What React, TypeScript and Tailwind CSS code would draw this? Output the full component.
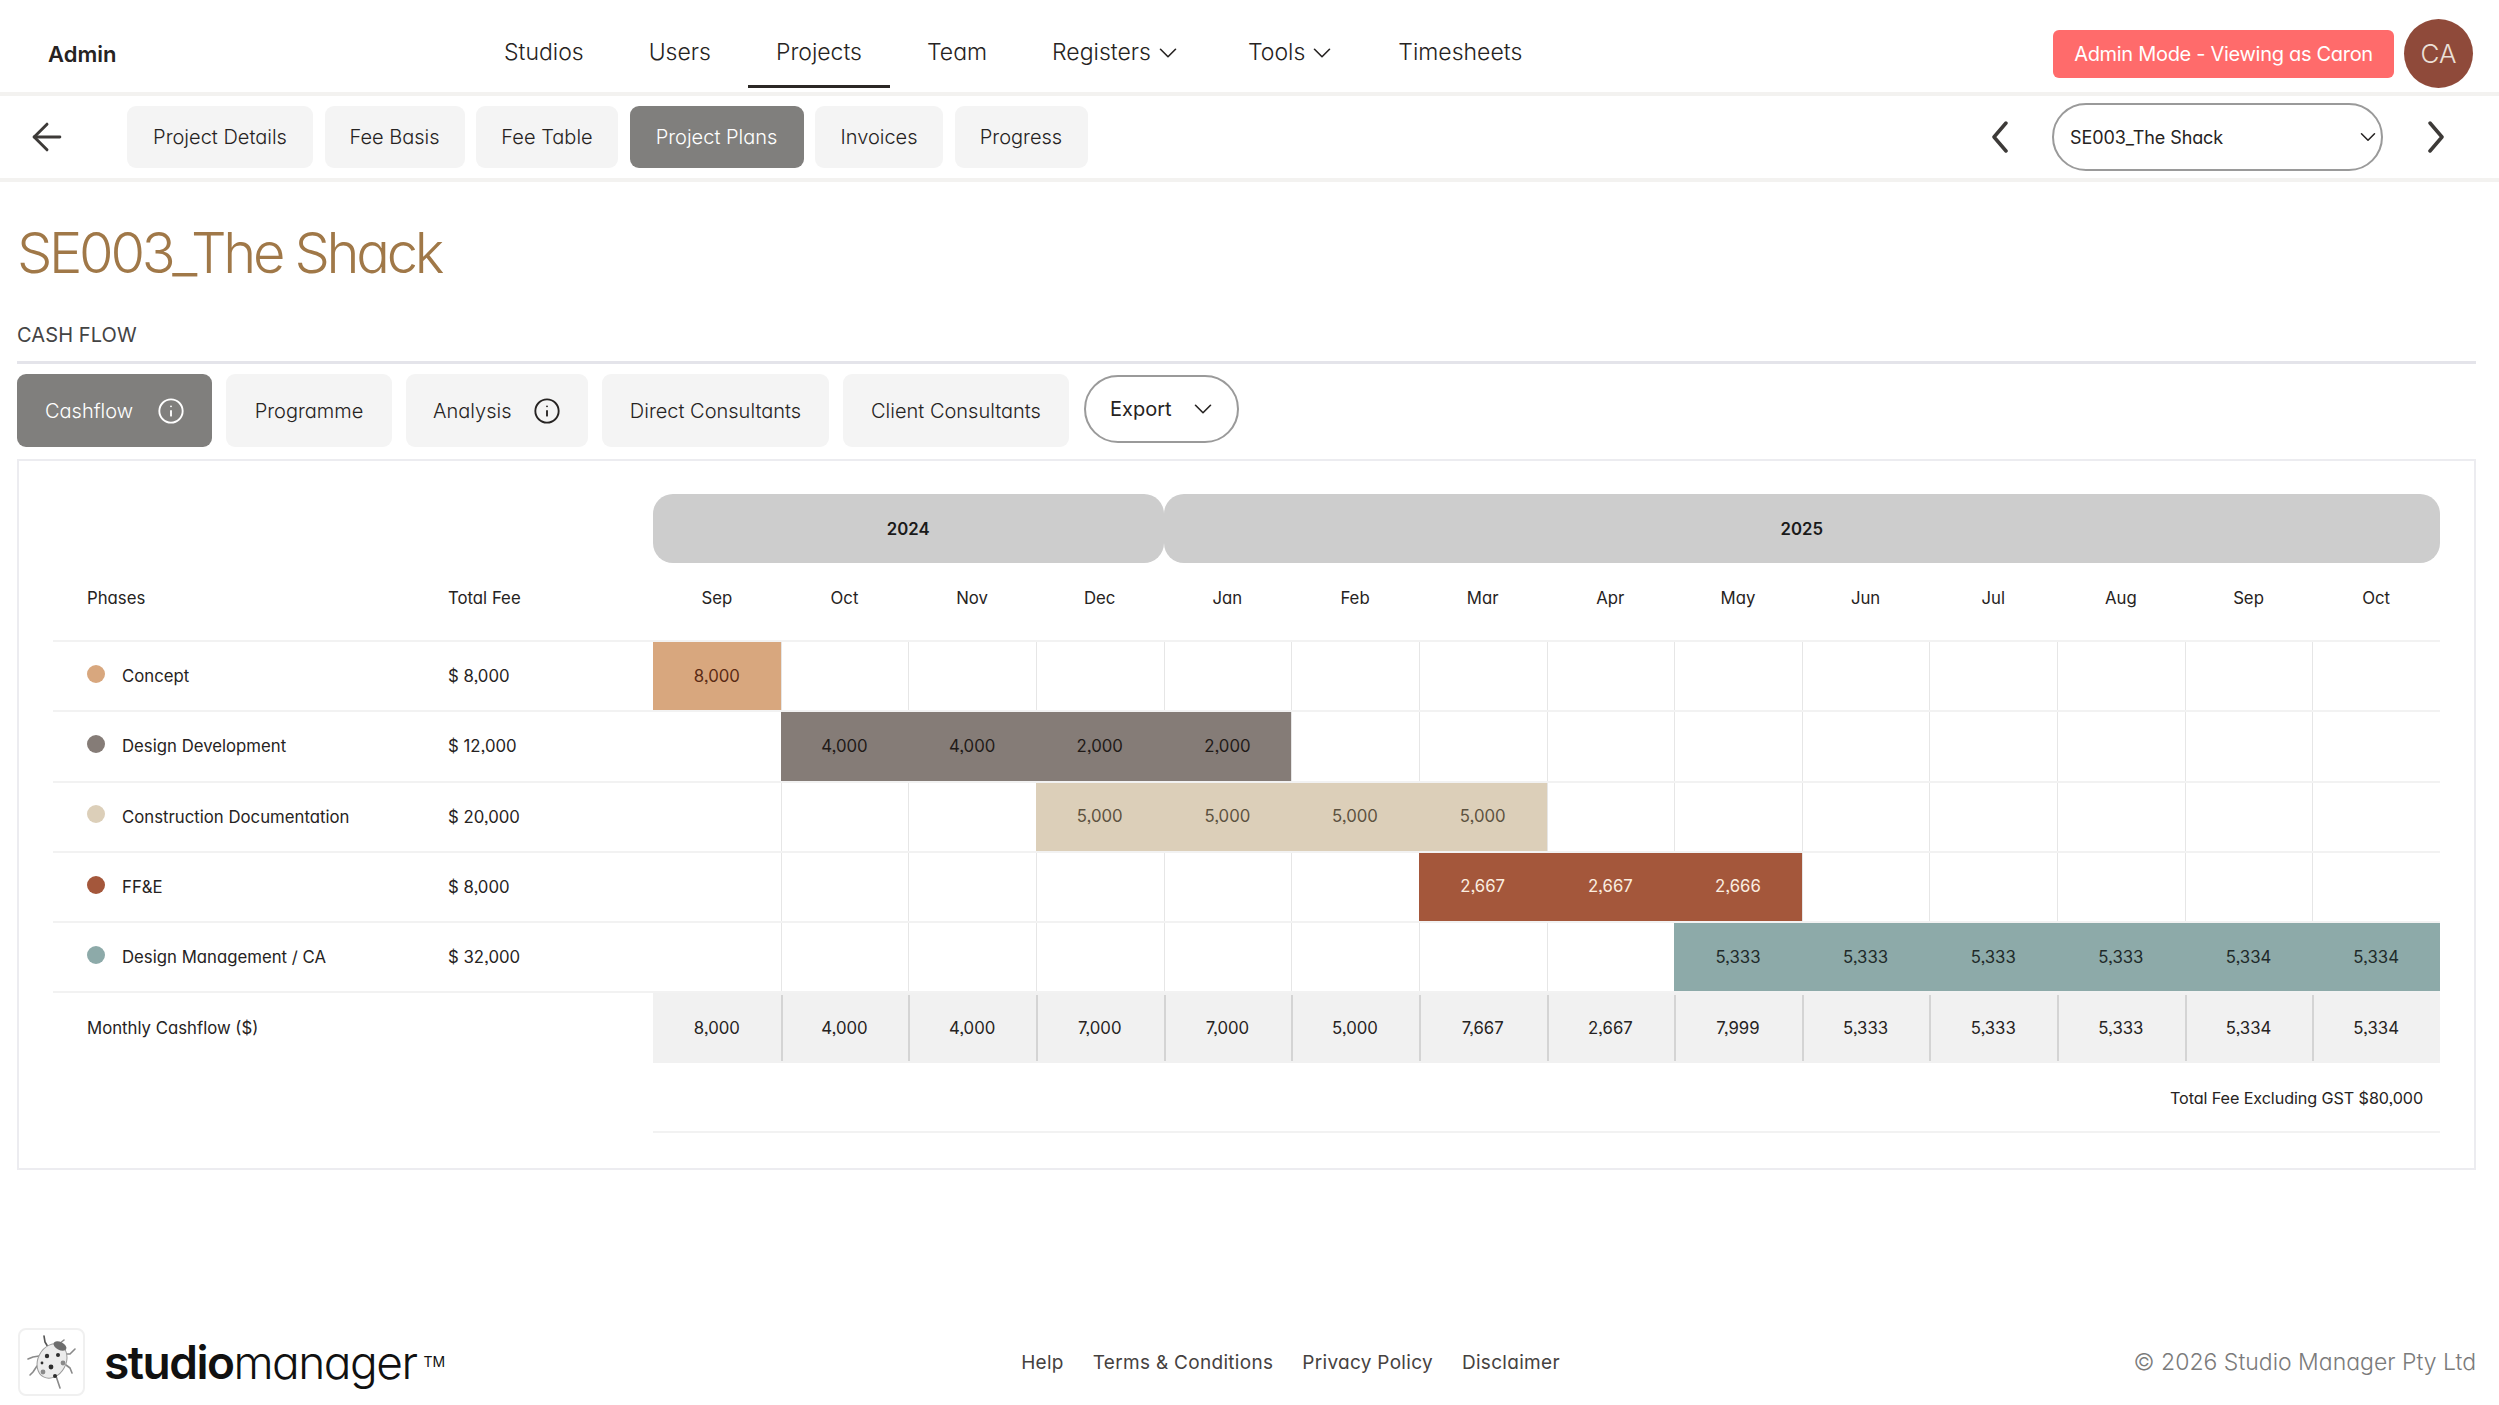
import React from "react";
import { ChevronDown, ArrowLeft, Info } from "lucide-react";

const font = "font-['Inter','Noto_Sans',sans-serif] [font-feature-settings:'cv11','ss03']";
const grid = "grid grid-cols-[395px_205px_repeat(14,minmax(0,1fr))]";
const months = ["Sep","Oct","Nov","Dec","Jan","Feb","Mar","Apr","May","Jun","Jul","Aug","Sep","Oct"];

type Phase = { name: string; fee: string; dot: string; fill: string; text: string; start: number; values: string[] };
const phases: Phase[] = [
  { name: "Concept", fee: "$ 8,000", dot: "bg-[#d8a77e]", fill: "bg-[#d8a77e]", text: "text-[#5a2a14]", start: 0, values: ["8,000"] },
  { name: "Design Development", fee: "$ 12,000", dot: "bg-[#857c77]", fill: "bg-[#857c77]", text: "text-[#1f1a18]", start: 1, values: ["4,000","4,000","2,000","2,000"] },
  { name: "Construction Documentation", fee: "$ 20,000", dot: "bg-[#dccfb9]", fill: "bg-[#dccfb9]", text: "text-[#5c5240]", start: 3, values: ["5,000","5,000","5,000","5,000"] },
  { name: "FF&E", fee: "$ 8,000", dot: "bg-[#a4573b]", fill: "bg-[#a4573b]", text: "text-[#fbeee0]", start: 6, values: ["2,667","2,667","2,666"] },
  { name: "Design Management / CA", fee: "$ 32,000", dot: "bg-[#8daaa9]", fill: "bg-[#8daaa9]", text: "text-[#1f2a2a]", start: 8, values: ["5,333","5,333","5,333","5,333","5,334","5,334"] },
];
const monthly = ["8,000","4,000","4,000","7,000","7,000","5,000","7,667","2,667","7,999","5,333","5,333","5,333","5,334","5,334"];

function Chevron({ dir }: { dir: "left" | "right" }) {
  return (
    <svg width="20" height="32" viewBox="0 0 20 32" fill="none" stroke="#3d3a38" strokeWidth="3.5" strokeLinecap="round" strokeLinejoin="round">
      <path d={dir === "left" ? "M16 2 L4 16 L16 30" : "M4 2 L16 16 L4 30"} />
    </svg>
  );
}

function Bug() {
  return (
    <svg width="50" height="56" viewBox="0 0 50 56" fill="none">
      <g stroke="#8a8a8a" strokeWidth="1.6" strokeLinecap="round" strokeLinejoin="round" fill="none">
        <path d="M21 13 L18 8 L17 2" stroke="#555" />
        <path d="M32 10 L37 6" />
        <path d="M38 20 L43 20 L48 15" />
        <path d="M12 22 L6 23 L1 25" />
        <path d="M10 32 L6 38 L3 41" />
        <path d="M39 31 L43 34 L45 39" />
        <path d="M29 42 L31 48 L33 54" />
      </g>
      <g transform="rotate(28 25 27)">
        <ellipse cx="25" cy="27" rx="14" ry="18" fill="#ececec" stroke="#9a9a9a" strokeWidth="1" />
        <ellipse cx="25" cy="10" rx="7" ry="4" fill="#6d6d6d" />
      </g>
      <g fill="#2e2e2e">
        <circle cx="20" cy="22" r="2.2" />
        <circle cx="31" cy="21" r="2" />
        <circle cx="24" cy="33" r="2.4" />
        <circle cx="15" cy="29" r="1.4" />
        <circle cx="28" cy="42" r="2" />
      </g>
      <g fill="#8a8a8a">
        <circle cx="36" cy="29" r="2.4" />
        <circle cx="16" cy="38" r="2.4" />
      </g>
    </svg>
  );
}

function MonthCells({ p }: { p: Phase }) {
  const cells = [];
  for (let i = 0; i < 14; i++) {
    const idx = i - p.start;
    if (idx >= 0 && idx < p.values.length) {
      cells.push(<div key={i} className={`flex items-center justify-center ${p.fill} ${p.text}`}>{p.values[idx]}</div>);
    } else {
      cells.push(<div key={i} className={i === 0 ? "" : "border-l border-[#e6e6e6]"} />);
    }
  }
  return <>{cells}</>;
}

export default function App() {
  const navItems = [
    { label: "Studios" },
    { label: "Users" },
    { label: "Projects", active: true },
    { label: "Team" },
    { label: "Registers", chevron: true },
    { label: "Tools", chevron: true },
    { label: "Timesheets" },
  ];
  const subTabs = [
    { label: "Project Details", w: "w-[186px]" },
    { label: "Fee Basis", w: "w-[140px]" },
    { label: "Fee Table", w: "w-[142px]" },
    { label: "Project Plans", w: "w-[174px]", active: true },
    { label: "Invoices", w: "w-[128px]" },
    { label: "Progress", w: "w-[133px]" },
  ];
  return (
    <div className={`${font} w-full min-h-[1405px] bg-white text-[#262322] font-light antialiased`}>
      <header className="relative flex h-[96px] items-start border-b-4 border-[#f3f2f0]">
        <div className="absolute left-[48px] top-[37px] text-[22px] leading-[34px] font-semibold">Admin</div>
        <nav className="ml-[476px] flex h-[88px] gap-[9px]">
          {navItems.map((n) => (
            <div key={n.label} className={`flex items-center gap-[2px] border-b-[3px] px-7 pt-[20px] text-[23px] ${n.active ? "border-[#2b2825]" : "border-transparent"} ${n.label === "Tools" ? "-mr-[4px]" : ""}`}>
              {n.label}
              {n.chevron && <ChevronDown size={30} strokeWidth={1.3} />}
            </div>
          ))}
        </nav>
        <div className="ml-auto mr-[26px] mt-[19px] flex items-center gap-[10px]">
          <div className="flex h-[48px] w-[341px] items-center justify-center rounded-[6px] bg-[#ff6b6b] text-[20px] font-normal tracking-[-0.3px] text-white">Admin Mode - Viewing as Caron</div>
          <div className="flex h-[69px] w-[69px] items-center justify-center rounded-full bg-[#8f4a3a] text-[26px] text-[#ebe0d8]">CA</div>
        </div>
      </header>

      <div className="flex h-[86px] items-center border-b-4 border-[#f3f2f0]">
        <ArrowLeft size={44} strokeWidth={1.6} className="ml-[25px] text-[#3d3a38]" />
        <div className="ml-[58px] flex gap-[11.5px]">
          {subTabs.map((t) => (
            <div key={t.label} className={`flex h-[62px] items-center justify-center rounded-[9px] text-[20px] ${t.w} ${t.active ? "bg-[#807f7d] text-white" : "bg-[#f4f4f4]"}`}>{t.label}</div>
          ))}
        </div>
        <div className="ml-auto mr-[53px] flex items-center">
          <Chevron dir="left" />
          <div className="ml-[42px] mr-[43px] flex h-[68px] w-[331px] items-center justify-between rounded-[34px] border-2 border-[#9a9a9a] pl-[16px] text-[18px] font-normal tracking-[-0.1px]">
            SE003_The Shack
            <ChevronDown size={26} strokeWidth={1.4} />
          </div>
          <Chevron dir="right" />
        </div>
      </div>

      <main className="px-[17px]">
        <h1 className="pt-[39px] text-[56px] leading-[64px] font-light tracking-[-3.3px] text-[#a07848]">SE003_The Shack</h1>
        <h2 className="mt-[36px] text-[20px] leading-[28px] font-normal tracking-[0.1px] text-[#444444]">CASH FLOW</h2>
        <div className="mt-3 mr-[6px] h-[3px] bg-[#e4e4ea]" />

        <div className="mt-[10px] flex items-center gap-[14px]">
          <div className="flex h-[73px] w-[195px] items-center justify-between rounded-[9px] bg-[#807f7d] pl-[28px] pr-[27px] text-[20px] text-white">Cashflow <Info size={28} strokeWidth={1.6} /></div>
          <div className="flex h-[73px] w-[166px] items-center justify-center rounded-[9px] bg-[#f4f4f4] text-[20px]">Programme</div>
          <div className="flex h-[73px] w-[182px] items-center justify-between rounded-[9px] bg-[#f4f4f4] pl-[27px] pr-[27px] text-[20px]">Analysis <Info size={28} strokeWidth={1.6} /></div>
          <div className="flex h-[73px] w-[227px] items-center justify-center rounded-[9px] bg-[#f4f4f4] text-[20px]">Direct Consultants</div>
          <div className="flex h-[73px] w-[226px] items-center justify-center rounded-[9px] bg-[#f4f4f4] text-[20px]">Client Consultants</div>
          <div className="-mt-[4px] ml-[1px] flex h-[68px] w-[155px] items-center justify-between rounded-[34px] border-2 border-[#9a9a9a] pl-[24px] pr-[19px] text-[20px] font-normal">Export <ChevronDown size={30} strokeWidth={1.3} /></div>
        </div>

        <section className="mt-3 mr-[6px] h-[711px] border-2 border-[#ececf0] pl-[34px] pr-[34px] pt-[33px] text-[16.75px] font-normal">
          <div className={grid}>
            <div className="col-span-2" />
            <div className="col-span-4 flex h-[69px] items-center justify-center rounded-[20px] bg-[#cdcdcd] pt-[2px] font-semibold text-[#1a1a1a]">2024</div>
            <div className="col-span-10 flex h-[69px] items-center justify-center rounded-[20px] bg-[#cdcdcd] pt-[2px] font-semibold text-[#1a1a1a]">2025</div>
          </div>
          <div className={`${grid} h-[77px] items-center pb-[6px]`}>
            <div className="pl-[34px]">Phases</div>
            <div>Total Fee</div>
            {months.map((m, i) => <div key={i} className="text-center">{m}</div>)}
          </div>
          {phases.map((p) => (
            <div key={p.name} className={`${grid} h-[70.3px] border-t-2 border-[#f2f2f2]`}>
              <div className="flex items-center gap-[17px] pl-[34px] pt-[1px]">
                <span className={`-mt-[6px] h-[18px] w-[18px] rounded-full ${p.dot}`} />
                {p.name}
              </div>
              <div className="flex items-center pt-[1px]">{p.fee}</div>
              <MonthCells p={p} />
            </div>
          ))}
          <div className={`${grid} h-[72px] border-t-2 border-[#f2f2f2]`}>
            <div className="col-span-1 flex items-center pl-[34px]">Monthly Cashflow ($)</div>
            <div />
            {monthly.map((v, i) => (
              <div key={i} className="bg-[#f1f1f1] py-[2px]">
                <div className={`flex h-full items-center justify-center ${i === 0 ? "" : "border-l-2 border-[#d4d4d4] pr-[2px]"}`}>{v}</div>
              </div>
            ))}
          </div>
          <div className="ml-[600px] flex h-[70px] items-center justify-end border-b-2 border-[#f2f2f2] pr-[17px] pt-[2px] text-[16.2px] tracking-[-0.1px]">Total Fee Excluding GST $80,000</div>
        </section>
      </main>

      <footer className="mt-[158px] flex items-center pl-[18px] pr-[23px]">
        <div className="flex h-[68px] w-[67px] items-center justify-center rounded-[8px] border-2 border-[#f0f0f0]"><Bug /></div>
        <div className="ml-[19px] flex items-baseline text-[46px] leading-[60px] tracking-[-1.5px] text-[#111]">
          <span className="font-semibold">studio</span>
          <span className="font-light">manager</span>
          <span className="ml-[7px] self-center text-[14px] font-normal tracking-normal">TM</span>
        </div>
        <div className="ml-[576px] flex gap-[29px] pt-[2px] text-[19px] font-normal tracking-[0.3px] text-[#46423f]">
          <span>Help</span><span>Terms &amp; Conditions</span><span>Privacy Policy</span><span>Disclaimer</span>
        </div>
        <div className="ml-auto text-[23px] text-[#7b7b7b]">© 2026 Studio Manager Pty Ltd</div>
      </footer>
    </div>
  );
}
